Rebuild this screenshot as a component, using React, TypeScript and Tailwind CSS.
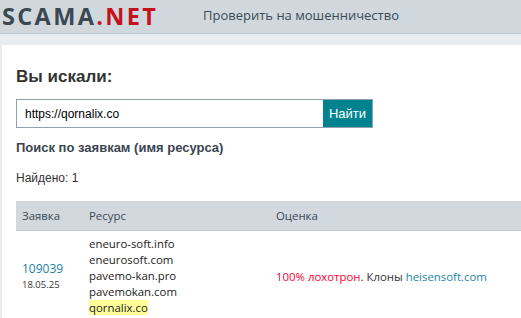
import React from 'react';

const domains = ['eneuro-soft.info', 'eneurosoft.com', 'pavemo-kan.pro', 'pavemokan.com'];

const App = () => {
  return (
    <div className="w-[521px] h-[318px] overflow-hidden bg-[#e9edf0] font-['Open_Sans',sans-serif] text-[#333]">
      <header className="h-[33px] bg-[#d0d8de] shadow-[0_1px_0_#b9c5cd] flex items-start">
        <div className="pl-[2px] w-[203px] whitespace-nowrap text-[23.5px] leading-[33px] font-bold tracking-[0.1em] text-[#3a4852]">
          SCAMA<span className="text-[#d0103a]">.</span><span className="text-[#c4121c]">NET</span>
        </div>
        <nav className="text-[13px] leading-[31px] text-[#3b4a55]">Проверить на мошенничество</nav>
      </header>
      <main className="mt-[12px] ml-[2px] bg-white h-full px-[14px] pt-[23px]">
        <h1 className="font-['Liberation_Sans',sans-serif] font-bold text-[17px] leading-none text-[#333]">Вы искали:</h1>
        <div className="flex mt-[14px] h-[29px]">
          <div className="w-[307px] border border-[#8fa3ad] border-r-0 flex items-center pl-[8px] font-['Liberation_Sans',sans-serif] text-[12px] text-black">
            https://qornalix.co
          </div>
          <button className="w-[50px] bg-[#00838f] border border-[#8fa3ad] border-l-0 text-white font-['Liberation_Sans',sans-serif] text-[13px]">
            Найти
          </button>
        </div>
        <h2 className="mt-[10px] font-['Liberation_Sans',sans-serif] font-bold text-[13px] text-[#3a4550]">Поиск по заявкам (имя ресурса)</h2>
        <p className="mt-[11px] font-['Liberation_Sans',sans-serif] text-[12px] text-[#333]">Найдено: 1</p>
        <table className="mt-[14px] w-[506px] text-[11.4px] border-collapse">
          <thead>
            <tr className="bg-[#d1d8de] border-b border-[#bcc7ce] h-[30px] text-left text-[#3b4a55]">
              <th className="font-normal pl-[6px] w-[73px]">Заявка</th>
              <th className="font-normal w-[187px]">Ресурс</th>
              <th className="font-normal">Оценка</th>
            </tr>
          </thead>
          <tbody>
            <tr>
              <td className="pl-[6px] pt-[6px] align-middle">
                <div className="text-[12px] leading-[16px] text-[#2183a0]">109039</div>
                <div className="text-[9.5px] leading-[16px] text-[#333]">18.05.25</div>
              </td>
              <td className="pt-[5px] leading-[16px] text-[#222]">
                {domains.map((d) => (
                  <div key={d}>{d}</div>
                ))}
                <div><span className="bg-[#ffff99]">qornalix.co</span></div>
              </td>
              <td className="pt-[6px] align-middle">
                <span className="text-[#ff0033]">100% лохотрон</span>. Клоны{' '}
                <span className="text-[#1a86a0]">heisensoft.com</span>
              </td>
            </tr>
          </tbody>
        </table>
      </main>
    </div>
  );
};

export default App;
